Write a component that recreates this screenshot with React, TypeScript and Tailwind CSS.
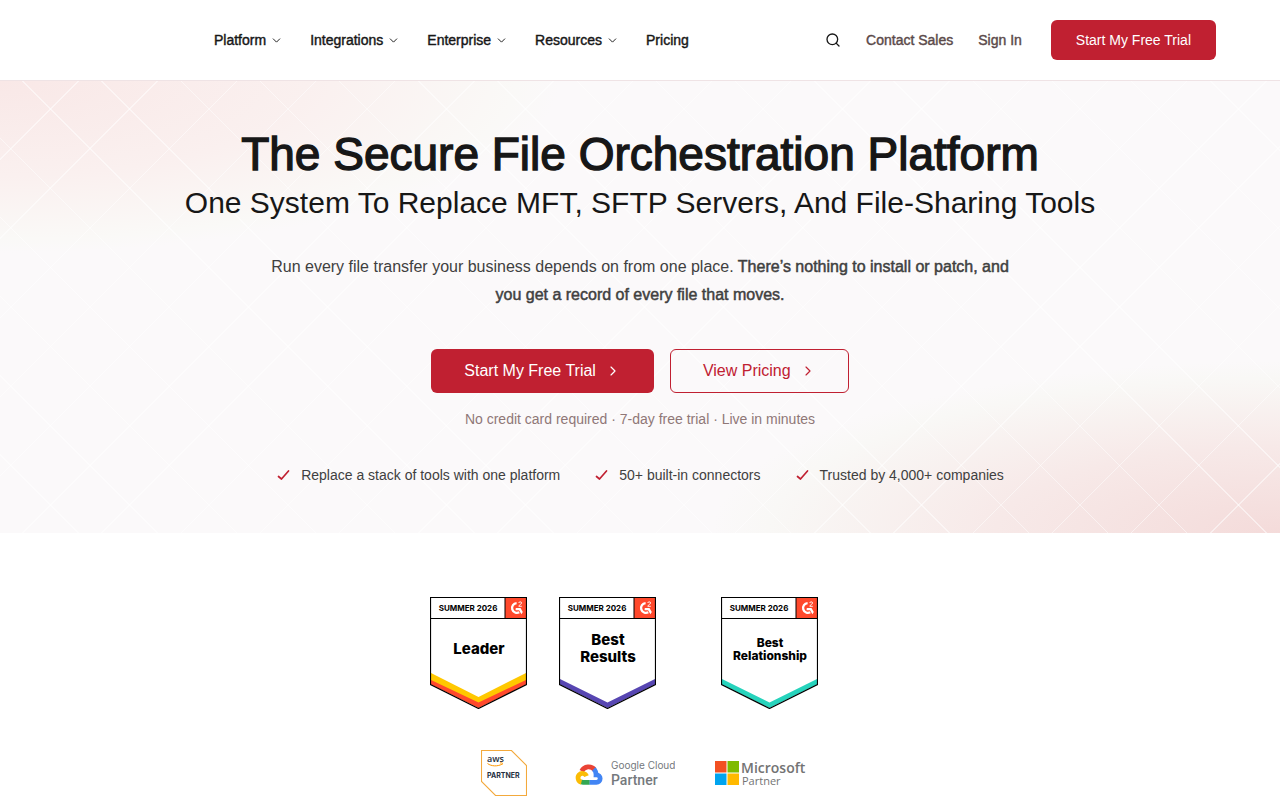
import type { ReactNode } from "react";
import { ChevronDown, ChevronRight, Search } from "lucide-react";

const menus = ["Platform", "Integrations", "Enterprise", "Resources"];

const benefits = [
  "Replace a stack of tools with one platform",
  "50+ built-in connectors",
  "Trusted by 4,000+ companies",
];

const medium = "[-webkit-text-stroke:0.03em_currentColor]";

function Header() {
  return (
    <header className="flex h-[81px] items-center justify-between border-b border-[#efe3e5] bg-white pr-16 pl-[214px]">
      <nav aria-label="Main" className={`flex items-center gap-[27px] text-sm text-[#171717] ${medium}`}>
        {menus.map((name) => (
          <button key={name} type="button" className="flex items-center gap-1">
            {name}
            <ChevronDown size={13} strokeWidth={1.75} className="mt-px" aria-hidden />
          </button>
        ))}
        <a href="#pricing">Pricing</a>
      </nav>
      <div className="flex items-center gap-[25px] text-sm text-[#5b4a4a]">
        <button type="button" aria-label="Search" className="text-[#171717]">
          <Search size={16} strokeWidth={2} aria-hidden />
        </button>
        <a href="#contact" className={medium}>Contact Sales</a>
        <a href="#signin" className={medium}>Sign In</a>
        <a href="#trial" className="ml-1 flex h-10 items-center rounded-md bg-[#c02031] px-[25px] text-white">
          Start My Free Trial
        </a>
      </div>
    </header>
  );
}

function Tick() {
  return (
    <svg aria-hidden viewBox="0 0 16 16" className="size-4" fill="none" stroke="#c02031" strokeWidth="1.700" strokeLinecap="round" strokeLinejoin="round">
      <path d="M2.500 9.500L5.500 12 12.500 4" />
    </svg>
  );
}

function Hero() {
  return (
    <section className="relative bg-[#fbf9fa] pt-12 pb-12 text-center">
      <div
        aria-hidden
        className="absolute inset-0 bg-[radial-gradient(ellipse_560px_172px_at_0_0,#f9e8e7_0%,#faf0ef_55%,#faf9f7_92%,transparent_100%),radial-gradient(ellipse_568px_172px_at_100%_100%,#f4dbda_0%,#f7e9e8_50%,#f9f8f6_90%,transparent_100%)]"
      />
      <div
        aria-hidden
        className="absolute inset-0 bg-[repeating-linear-gradient(45deg,transparent_0_55px,rgba(255,255,255,0.5)_55px_56px),repeating-linear-gradient(135deg,transparent_0_55px,rgba(255,255,255,0.5)_55px_56px)]"
      />
      <div className="relative flex flex-col items-center px-6">
        <h1 className="text-[#171717]">
          <span className="block text-[46px] leading-[50px] [-webkit-text-stroke:0.03em_currentColor]">
            The Secure File Orchestration Platform
          </span>
          <span className="mt-1.5 block text-3xl leading-9">
            One System To Replace MFT, SFTP Servers, And File-Sharing Tools
          </span>
        </h1>
        <p className="mt-8 max-w-[760px] text-base leading-7 text-[#404040]">
          Run every file transfer your business depends on from one place.{" "}
          <strong className={`font-normal ${medium}`}>
            There’s nothing to install or patch, and you get a record of every file that moves.
          </strong>
        </p>
        <div className="mt-10 flex flex-wrap justify-center gap-4 text-base">
          <a href="#trial" className="flex h-11 items-center gap-[9px] rounded-md bg-[#c02031] px-[33px] text-white">
            Start My Free Trial
            <ChevronRight size={16} strokeWidth={1.75} aria-hidden />
          </a>
          <a href="#pricing" className="flex h-11 items-center gap-[9px] rounded-md border border-[#c02031] px-8 text-[#c02031]">
            View Pricing
            <ChevronRight size={16} strokeWidth={1.75} aria-hidden />
          </a>
        </div>
        <p className="mt-4 text-sm text-[#8f7777]">No credit card required · 7-day free trial · Live in minutes</p>
        <ul className="mt-9 flex flex-wrap justify-center gap-[34px] text-sm text-[#404040]">
          {benefits.map((b) => (
            <li key={b} className="flex items-center gap-[9px]">
              <Tick />
              {b}
            </li>
          ))}
        </ul>
      </div>
    </section>
  );
}

function Badge({ label, band, children }: { label: string; band: ReactNode; children: ReactNode }) {
  return (
    <svg role="img" aria-label={label} viewBox="0 0 97 112" className="h-28 w-[97px] font-['Inter',sans-serif]">
      <path d="M.5.5h96v87l-48 24-48-24z" fill="#fff" />
      {band}
      <path d="M75 1h21v20.500H75z" fill="#ff492c" />
      <path d="M.5 21.500h96M75 1v20.500" stroke="#000" fill="none" />
      <path d="M.5.5h96v87l-48 24-48-24z" fill="none" stroke="#000" strokeWidth="1.200" />
      <text x="38" y="14" textAnchor="middle" fontSize="8" fontWeight="700">SUMMER 2026</text>
      <path d="M86.600 6.100a4.900 4.900 0 1 0 2.700 9.200" fill="none" stroke="#fff" strokeWidth="2.300" />
      <path d="M85.800 10.900h4.700l2.300 4-1.400 2.400-2.300-4h-3.600z" fill="#fff" />
      <path d="M88.700 6c.2-1.500 2.900-1.600 2.900 0 0 1.200-2.600 1.700-2.800 3.300h3" fill="none" stroke="#fff" strokeWidth=".9" />
      {children}
    </svg>
  );
}

function Badges() {
  return (
    <div className="flex flex-wrap justify-center gap-8 pr-8">
      <Badge
        label="Leader, Summer 2026"
        band={
          <>
            <path d="M1 76l47.500 24L96 76v8l-47.500 23L1 84z" fill="#ffc800" />
            <path d="M1 83l47.500 22.500L96 83v4.500l-47.500 23.500L1 87.500z" fill="#ff492c" />
          </>
        }
      >
        <text x="49" y="57" textAnchor="middle" fontSize="15" fontWeight="800">Leader</text>
      </Badge>
      <Badge label="Best Results, Summer 2026" band={<path d="M1 82l47.500 23.500L96 82v5.500l-47.500 23.500L1 87.500z" fill="#5746b2" />}>
        <text x="49" y="48" textAnchor="middle" fontSize="15" fontWeight="800">Best</text>
        <text x="49" y="65" textAnchor="middle" fontSize="15" fontWeight="800">Results</text>
      </Badge>
      <div className="ml-[33px]">
        <Badge label="Best Relationship, Summer 2026" band={<path d="M1 82l47.500 23.500L96 82v5.500l-47.500 23.500L1 87.500z" fill="#27d3bc" />}>
          <text x="49" y="50" textAnchor="middle" fontSize="12" fontWeight="800">Best</text>
          <text x="49" y="63" textAnchor="middle" fontSize="12" fontWeight="800">Relationship</text>
        </Badge>
      </div>
    </div>
  );
}

function Partners() {
  return (
    <div className="mt-10 flex flex-wrap items-center justify-center gap-10 pl-2">
      <svg role="img" aria-label="AWS Partner" viewBox="0 0 46 48" className="h-12 w-[46px]">
        <path d="M.5 1.500h30l15 15v30h-31l-14-14z" fill="#fff" stroke="#f3a93c" strokeWidth="1.100" />
        <g fill="#252f3e">
          <text x="6" y="13" fontSize="9" fontWeight="600" fontFamily="Open Sans, sans-serif">aws</text>
          <text x="6" y="29" fontSize="7" fontWeight="700" fontFamily="Inter, sans-serif">PARTNER</text>
        </g>
        <path d="M6.500 14.500c4 3 10 3 14.300.8M19 14c1.500-.3 2.800-.3 2.400.6l-.7 1.400" fill="none" stroke="#f90" />
      </svg>
      <svg role="img" aria-label="Google Cloud Partner" viewBox="0 0 108 32" className="h-8 w-[108px]">
        <g fill="none" strokeWidth="5.400" transform="translate(3 3) scale(.88)">
          <path d="M13.300 12.600A8.800 8.800 0 0 1 28 11" stroke="#ea4335" />
          <path d="M27 10.200a8.800 8.800 0 0 1 2.600 6.600h.4a4.200 4.200 0 0 1 0 8.600H22" stroke="#4285f4" />
          <path d="M22.200 25.400h-7.400a5 5 0 0 1-3.200-1.100" stroke="#34a853" />
          <path d="M13 25.100A5 5 0 1 1 18.800 18.400" stroke="#fbbc05" />
        </g>
        <g fill="#75797d">
          <text x="44" y="12" fontSize="10" fontFamily="Inter, sans-serif">Google Cloud</text>
          <text x="44" y="28" fontSize="14" fontWeight="500" fontFamily="Roboto, sans-serif">Partner</text>
        </g>
      </svg>
      <svg role="img" aria-label="Microsoft Partner" viewBox="0 0 93 28" className="h-7 w-[93px]">
        <path d="M0 2h11.500v11.500H0z" fill="#f25022" />
        <path d="M12.500 2H24v11.500H12.500z" fill="#7fba00" />
        <path d="M0 14.500h11.500V26H0z" fill="#00a4ef" />
        <path d="M12.500 14.500H24V26H12.500z" fill="#ffb900" />
        <g fontFamily="Open Sans, sans-serif" fill="#737373">
          <text x="26" y="14" fontSize="14" fontWeight="600">Microsoft</text>
          <text x="27" y="26" fontSize="11">Partner</text>
        </g>
      </svg>
    </div>
  );
}

export default function App() {
  return (
    <div className="bg-white font-['Liberation_Sans',Arial,sans-serif]">
      <Header />
      <main>
        <Hero />
        <section aria-label="Awards and partners" className="pt-16 pb-1">
          <Badges />
          <Partners />
        </section>
      </main>
    </div>
  );
}
